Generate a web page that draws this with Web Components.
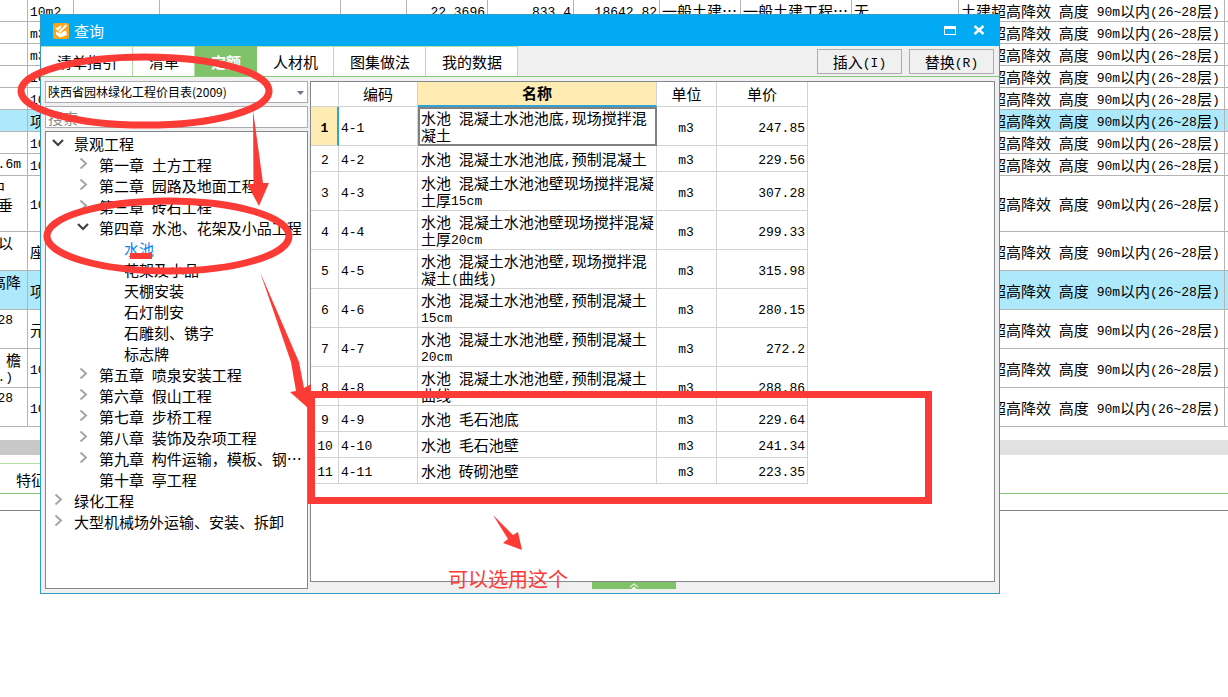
<!DOCTYPE html>
<html lang="zh-CN">
<head>
<meta charset="utf-8">
<title>查询</title>
<style>
html, body { height: 100%; }
body { margin: 0; overflow: hidden; position: relative; background: #fff; color: #000; font: 15px/18px "Noto Sans CJK SC", sans-serif; }
</style>
</head>
<body>
<cost-sheet></cost-sheet>
<query-window heading="查询">
  <tab-strip slot="tabs" items="清单指引,清单,定额,人材机,图集做法,我的数据" active="定额"></tab-strip>
  <push-button slot="actions">插入(I)</push-button>
  <push-button slot="actions">替换(R)</push-button>
  <library-panel slot="side"></library-panel>
  <price-table slot="main"></price-table>
</query-window>
<markup-layer>可以选用这个</markup-layer>

<script>
/* Latin runs use a narrower monospace face so that they take half the width of a Han character. */
const mix = t => t.replace(/[\x20-\x7e]+/g, m => `<span class="l">${m}</span>`);
const base = `*,:host{box-sizing:border-box} .l{font-family:"Liberation Mono","Noto Sans CJK SC",monospace;font-size:13px;line-height:0;vertical-align:1px;white-space:pre}`;

class BaseElement extends HTMLElement {
  connectedCallback() {
    if (this.shadowRoot) return;
    this.attachShadow({ mode: 'open' }).innerHTML = `<style>${base}${this.css()}</style>${this.html()}`;
  }
}

customElements.define('cost-sheet', class extends BaseElement {
  css() { return `
    :host{display:block;width:100%;overflow:hidden}
    table{width:100%;table-layout:fixed;border-collapse:separate;border-spacing:0}
    td{height:22px;padding:1px 2px 0;border:solid #b4b4b4;border-width:0 1px 1px 0;overflow:hidden;white-space:nowrap;line-height:18px}
    td:last-child{border-right:0}
    tr.t td{height:39px} tr.x td{height:56px}
    tr.hi td{background:#aee9fb}
    td.n{text-align:right}
    td.d{vertical-align:top;padding:2px 6px 0 0}
    td.d div{display:flex;justify-content:flex-end}
    td.d .l{line-height:18px}
    td.d .short{padding-right:8px}
    td.d .edge{padding-right:16px}
    .bar{height:15px;margin:13px 0 8px;background:#e1e1e1}
    .bar i{display:block;width:40%;height:100%;background:#c8c8c8}
    .tabs{display:flex;height:31px;border-bottom:1px solid #84c874}
    .tabs span{width:160px;padding:5px 16px 0;border-top:1px solid #b5e0a5;line-height:22px}
    .foot{height:17px;border-bottom:1px solid #828282}`; }
  html() {
    const rows = [
      ['', [], '10m2'], ['', [], 'm3'], ['', [], 'm3'], ['', [], '10m3'], ['', [], '10m3'],
      ['hi', [], '项'], ['', [], '10m3'], ['', ['.6m'], '10m3'],
      ['x', ['中', '垂'], '10m3'], ['t', ['以'], '座'], ['t hi', ['高降'], '项'],
      ['t', ['28'], '元'], ['t', ['檐', '.)'], '10m3'], ['t', ['28'], '10m3']];
    const pad = { '28': 'short', '.)': 'short', '垂': 'short', '以': 'short', '中': 'edge' };
    const widths = [28, 46, 86, 181, 66, 81, 86, 86, 81, 111, 107, 266];
    const first = ['', '', '22.3696', '833.4', '18642.82', '一般土建…', '一般土建工程…', '无'];
    return `<table><colgroup>${widths.map(w => `<col style="width:${w}px">`).join('')}<col></colgroup><tbody>${rows.map((r, i) => {
      const mid = first.map((c, k) => `<td class="${k < 5 ? 'n' : ''}">${i ? '' : mix(c)}</td>`).join('');
      const desc = r[1].map(s => `<div class="${pad[s] || ''}">${mix(s)}</div>`).join('');
      return `<tr class="${r[0]}"><td class="d">${desc}</td><td>${mix(r[2])}</td><td></td>${mid}<td>${mix('土建超高降效 高度 90m以内(26~28层)')}</td><td></td></tr>`;
    }).join('')}</tbody></table>
    <div class="bar"><i></i></div><div class="tabs"><span>特征</span></div><div class="foot"></div>`;
  }
});

customElements.define('query-window', class extends BaseElement {
  css() { return `
    :host{position:absolute;left:40px;right:228px;top:14px;height:580px;display:flex;flex-direction:column;background:#f0f0f0;border:1px solid #2f9dc8}
    header{display:flex;align-items:center;height:31px;padding:0 14px 0 12px;background:#02a9f3;color:#fff}
    h1{flex:1;margin:0 0 0 5px;font-size:15px;font-weight:400;line-height:22px}
    header button{display:block;border:0;padding:0;margin-left:17px;width:12px;height:12px;background:none;color:#fff}
    header svg{display:block}
    nav{display:flex;height:31px;border-bottom:1px solid #84c874}
    .sp{flex:1}
    .act{display:flex;gap:7px;padding:3px 5px 0 0}
    main{flex:1;display:flex;min-height:0;gap:2px;padding:4px}
    .right{flex:1;display:flex;flex-direction:column;min-width:0}
    .grip{flex:none;align-self:center;margin-right:38px;width:84px;height:7px;border:0;padding:0;background:#80c269;display:flex;justify-content:center}`; }
  html() { return `
    <header><svg width="16" height="16" viewBox="0 0 16 16"><rect width="16" height="16" rx="2" fill="#f9a51a"/><path d="M2 4.500q2.500 1 4-1l3-1.500-1.500 3.500L4.500 8z" fill="#fff"/><path d="M3 8.500 5.500 10 13 7.500l1 4.500-7 2.500-4-3z" fill="#fff"/><path d="M6.500 9.500 13.500 2.500" stroke="#f9a51a" stroke-width="3.600"/><path d="M6 9.500 13.500 2" stroke="#fff" stroke-width="2"/></svg>
      <h1>${this.getAttribute('heading')}</h1>
      <button aria-label="最大化"><svg width="12" height="12"><path d="M0 1h12v9H0zM1 4v5h10V4z" fill="#fff" fill-rule="evenodd"/></svg></button>
      <button aria-label="关闭"><svg width="12" height="12"><path d="M1.500 1l9 8M10.500 1l-9 8" stroke="#fff" stroke-width="2.400"/></svg></button></header>
    <nav><slot name="tabs"></slot><div class="sp"></div><div class="act"><slot name="actions"></slot></div></nav>
    <main><slot name="side"></slot><div class="right"><slot name="main"></slot>
      <button class="grip" aria-label="展开"><svg width="12" height="7" fill="none"><path d="M2 5l4-3 4 3" stroke="#d4edc9" stroke-width="1.500"/><path d="M3.500 7 6 4.500 8.500 7z" fill="#fff"/></svg></button></div></main>`; }
});

customElements.define('tab-strip', class extends BaseElement {
  css() { return `
    :host{display:flex}
    button{height:30px;border:solid #b5e0a5;border-width:1px 1px 0 0;background:#fff;font:15px/22px "Noto Sans CJK SC",sans-serif;padding:0 15px 0 16px;color:#000}
    button:first-child{padding-left:15px}
    button.on{background:#80c269;border-color:#80c269;color:#fff;font-weight:700}`; }
  html() { return this.getAttribute('items').split(',').map(t => `<button class="${t === this.getAttribute('active') ? 'on' : ''}">${t}</button>`).join(''); }
});

customElements.define('push-button', class extends BaseElement {
  css() { return `:host{display:block}
    button{width:85px;height:25px;padding:0;border:1px solid #adadad;background:#f0f0f0;color:#000;font:15px/22px "Noto Sans CJK SC",sans-serif}`; }
  html() { return `<button>${mix(this.textContent)}</button>`; }
});

customElements.define('library-panel', class extends BaseElement {
  css() { return `
    :host{flex:0 0 263px;display:flex;flex-direction:column;gap:3px}
    .combo{position:relative;display:flex}
    .combo svg{position:absolute;right:4px;top:10px;pointer-events:none}
    select,input{appearance:none;width:100%;height:22px;margin:0;padding:0 2px;border:1px solid #abadb3;border-radius:0;background:#fff;color:#000;outline:0}
    select{font:12px/20px "Noto Sans CJK SC",sans-serif}
    input{font:15px/20px "Noto Sans CJK SC",sans-serif}
    input::placeholder{color:#8c8c8c}
    .tree{flex:1;min-height:0;border:1px solid #828790;background:#fff;padding:1px 0;overflow:hidden}
    ul{list-style:none;margin:0;padding:0}
    ul ul{padding-left:25px}
    .row{display:flex;height:21px;line-height:21px;white-space:nowrap}
    .row>svg{flex:none;margin:3px 10px 0 6px}
    .row>b{flex:none;width:28px}
    .name{flex:1;min-width:0}
    .sel{color:#0a85f0}`; }
  html() {
    const shut = '<svg width="12" height="12" fill="none"><path d="M3.500 1.500 9 6.500l-5.500 5" stroke="#a6a6a6" stroke-width="2"/></svg>';
    const open = '<svg width="12" height="12" fill="none"><path d="M1 4l5 5 5-5" stroke="#404040" stroke-width="2.200"/></svg>';
    const node = ([name, kids]) => `<li><div class="row">${kids === undefined ? '<b></b>' : kids.length ? open : shut}<span class="name ${name === '水池' ? 'sel' : ''}">${mix(name)}</span></div>${kids && kids.length ? `<ul>${kids.map(node).join('')}</ul>` : ''}</li>`;
    const data = [
      ['景观工程', [
        ['第一章 土方工程', []], ['第二章 园路及地面工程', []], ['第三章 砖石工程', []],
        ['第四章 水池、花架及小品工程', [['水池'], ['花架及小品'], ['天棚安装'], ['石灯制安'], ['石雕刻、镌字'], ['标志牌']]],
        ['第五章 喷泉安装工程', []], ['第六章 假山工程', []], ['第七章 步桥工程', []], ['第八章 装饰及杂项工程', []],
        ['第九章 构件运输，模板、钢…', []], ['第十章 亭工程']]],
      ['绿化工程', []], ['大型机械场外运输、安装、拆卸', []]];
    return `<div class="combo"><select aria-label="定额库"><option>陕西省园林绿化工程价目表(2009)</option></select><svg width="7" height="4"><path d="M0 0h7L3.500 4z" fill="#6d7380"/></svg></div>
      <input type="text" placeholder="搜索" aria-label="搜索">
      <div class="tree"><ul>${data.map(node).join('')}</ul></div>`;
  }
});

customElements.define('price-table', class extends BaseElement {
  css() { return `
    :host{display:block;flex:1;min-height:0;border:1px solid #828790;background:#fff;overflow:hidden}
    table{width:497px;table-layout:fixed;border-collapse:separate;border-spacing:0}
    th,td{border:solid #d2d2d2;border-width:0 1px 1px 0;font-weight:400;padding:0 3px 0 2px;line-height:17px}
    th{height:25px;padding:0 0 2px}
    td{height:26px}
    tr.tall td, tr.tall th{height:39px}
    tbody th{padding:0 0 0 1px}
    td.name{padding:0 0 0 3px;white-space:nowrap}
    td.u{text-align:center} td.p{text-align:right;padding-right:2px}
    .cur{background:#ffecb3;font-weight:700}
    thead .cur{border-bottom:2px solid #2fa3d3}
    tbody .cur{border-right:2px solid #2fa3d3}
    tr.now td.name{outline:2px solid #808080;outline-offset:-2px}`; }
  html() {
    const rows = [
      ['4-1', '水池 混凝土水池池底,现场搅拌混|凝土', '247.85'],
      ['4-2', '水池 混凝土水池池底,预制混凝土', '229.56'],
      ['4-3', '水池 混凝土水池池壁现场搅拌混凝|土厚15cm', '307.28'],
      ['4-4', '水池 混凝土水池池壁现场搅拌混凝|土厚20cm', '299.33'],
      ['4-5', '水池 混凝土水池池壁,现场搅拌混|凝土(曲线)', '315.98'],
      ['4-6', '水池 混凝土水池池壁,预制混凝土|15cm', '280.15'],
      ['4-7', '水池 混凝土水池池壁,预制混凝土|20cm', '272.2'],
      ['4-8', '水池 混凝土水池池壁,预制混凝土|曲线', '288.86'],
      ['4-9', '水池 毛石池底', '229.64'], ['4-10', '水池 毛石池壁', '241.34'], ['4-11', '水池 砖砌池壁', '223.35']];
    return `<table><colgroup>${[28, 79, 239, 60, 91].map(w => `<col style="width:${w}px">`).join('')}</colgroup>
      <thead><tr><th></th><th>编码</th><th class="cur">名称</th><th>单位</th><th>单价</th></tr></thead>
      <tbody>${rows.map((r, i) => `<tr class="${r[1].includes('|') ? 'tall' : ''} ${i ? '' : 'now'}"><th class="${i ? '' : 'cur'}">${mix(String(i + 1))}</th><td>${mix(r[0])}</td><td class="name">${r[1].split('|').map(mix).join('<br>')}</td><td class="u">${mix('m3')}</td><td class="p">${mix(r[2])}</td></tr>`).join('')}</tbody></table>`;
  }
});

/* Red pen marks drawn over the window: their places on the canvas are their content. */
customElements.define('markup-layer', class extends BaseElement {
  css() { return `
    :host{position:absolute;inset:0;pointer-events:none;color:#fc3a36}
    svg{position:absolute;left:0;top:0;overflow:visible}
    p{position:absolute;left:448px;top:567px;margin:0;font-size:20px;line-height:24px;white-space:nowrap}`; }
  html() { return `<svg width="1228" height="697" fill="none" stroke="#fc3a36" stroke-width="7">
      <ellipse cx="145" cy="91" rx="124" ry="34"/><ellipse cx="168" cy="236" rx="121" ry="35"/>
      <rect x="311.500" y="394.500" width="617" height="106"/>
      <g fill="#fc3a36" stroke="none"><path d="M130 253h22v6h-22z"/>
      <path d="M253 110 263 183 269 183 259 206 247 184 253.500 184z"/>
      <path d="M260 272 299 362 304 388 311 384 311 410 308 408 290 392 296 391 291 362z"/>
      <path d="M493 515 513 535 518 532 522 550 503 543 508 539z"/></g></svg><p><slot></slot></p>`; }
});
</script>
</body>
</html>
